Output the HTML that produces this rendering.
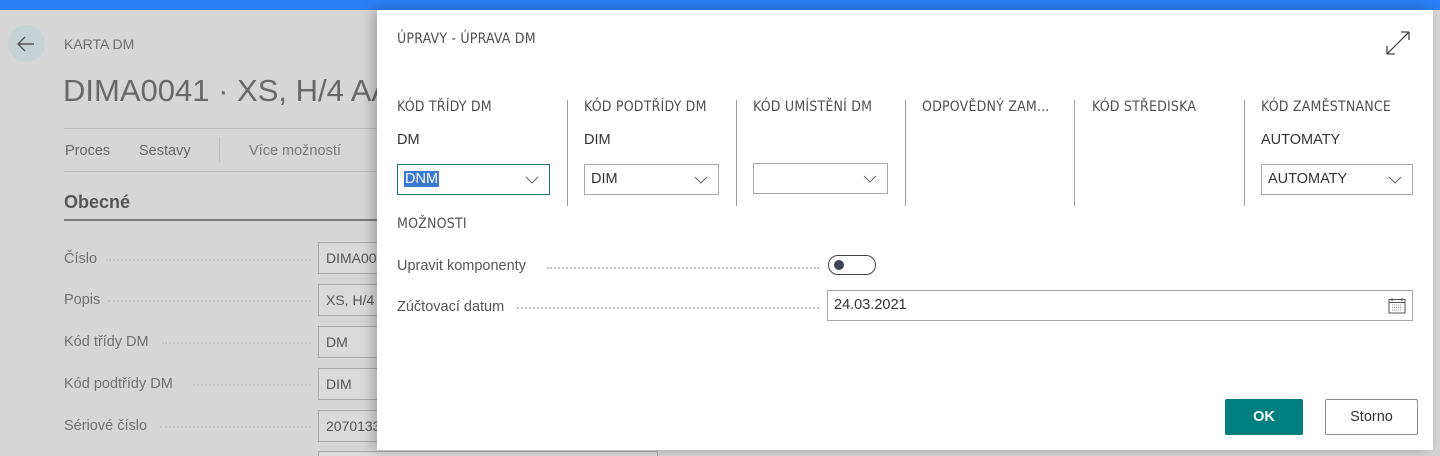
<!DOCTYPE html><html><head><meta charset="utf-8"><style>
*{margin:0;padding:0;box-sizing:border-box}
html,body{width:1440px;height:456px;overflow:hidden}
body{background:#d6d6d6;font-family:"Liberation Sans",sans-serif;position:relative;color:#505050}
.a{position:absolute;white-space:nowrap}
.bg{color:#6e6e6e}
.fld{position:absolute;left:318px;width:360px;height:32px;border:1px solid #a8a8a8;background:#dadada;font-size:14px;color:#555;padding:7px 7px}
.lbl{position:absolute;left:64px;font-size:14.5px;color:#707070}
.dots{position:absolute;border-top:2px dotted #c4c4c4;height:0}
#dlg{position:absolute;left:377px;top:10px;width:1056px;height:440px;background:#fff;box-shadow:-4px 0 12px rgba(0,0,0,.25)}
.h{position:absolute;font-size:14px;letter-spacing:.2px;color:#505050;font-family:"DejaVu Sans Condensed","Liberation Sans",sans-serif}
.v{position:absolute;font-size:14.5px;color:#333}
.sel{position:absolute;height:31px;border:1px solid #a8a8a8;font-size:14.5px;color:#333;padding:6px 6px}
.sel svg{position:absolute;right:10px;top:11px}
.sep{position:absolute;top:90px;height:106px;width:1px;background:#a0a0a0}
</style></head><body>
<div class="a" style="left:0;top:0;width:1440px;height:10px;background:#2b7ef5"></div>
<div class="a" style="left:8px;top:25px;width:37px;height:37px;border-radius:50%;background:#c6d3d4"></div>
<svg class="a" style="left:15px;top:33px" width="22" height="22" viewBox="0 0 22 22"><path d="M19 11H3M10 4L3 11l7 7" fill="none" stroke="#555" stroke-width="1.4"/></svg>
<div class="a bg" style="left:64px;top:36px;font-size:14px">KARTA DM</div>
<div class="a" style="left:63px;top:73px;font-size:31px;color:#686868">DIMA0041 · XS, H/4 AA</div>
<div class="a" style="left:64px;top:128px;width:320px;height:1px;background:#bdbdbd"></div>
<div class="a" style="left:65px;top:143px;font-size:14.5px;color:#666">Proces</div>
<div class="a" style="left:139px;top:143px;font-size:14.5px;color:#666">Sestavy</div>
<div class="a" style="left:219px;top:137px;width:1px;height:25px;background:#bbb"></div>
<div class="a" style="left:249px;top:143px;font-size:14.5px;color:#777">Více možností</div>
<div class="a" style="left:64px;top:171px;width:320px;height:1px;background:#bdbdbd"></div>
<div class="a" style="left:64px;top:192px;font-size:18px;font-weight:bold;color:#555">Obecné</div>
<div class="a" style="left:64px;top:219px;width:320px;height:2px;background:#7a7a7a"></div>
<div class="lbl" style="top:251px">Číslo</div><div class="dots" style="left:106px;width:205px;top:259px"></div><div class="fld" style="top:242px">DIMA0041</div>
<div class="lbl" style="top:292px">Popis</div><div class="dots" style="left:108px;width:203px;top:300px"></div><div class="fld" style="top:284px">XS, H/4 AA</div>
<div class="lbl" style="top:334px">Kód třídy DM</div><div class="dots" style="left:162px;width:149px;top:342px"></div><div class="fld" style="top:326px">DM</div>
<div class="lbl" style="top:376px">Kód podtřídy DM</div><div class="dots" style="left:193px;width:118px;top:384px"></div><div class="fld" style="top:368px">DIM</div>
<div class="lbl" style="top:418px">Sériové číslo</div><div class="dots" style="left:160px;width:151px;top:426px"></div><div class="fld" style="top:410px">20701332</div>
<div class="fld" style="top:451px;width:340px;height:5px"></div>
<div id="dlg">
<div class="h" style="left:20px;top:21px">ÚPRAVY - ÚPRAVA DM</div>
<svg class="a" style="left:1008px;top:20px" width="26" height="26" viewBox="0 0 26 26"><path d="M2 24L24 2M2 24v-8M2 24h8M24 2h-8M24 2v8" fill="none" stroke="#444" stroke-width="1.3"/></svg>
<div class="h" style="left:20px;top:89px">KÓD TŘÍDY DM</div>
<div class="v" style="left:20px;top:122px">DM</div>
<div class="sel" style="left:20px;top:154px;width:153px;border-color:#19777a"><span style="background:#3a78d6;color:#fff;padding:0 1px">DNM</span><svg width="14" height="8"><path d="M1 1l6 6 6-6" fill="none" stroke="#666"/></svg></div>
<div class="sep" style="left:190px"></div>
<div class="h" style="left:207px;top:89px">KÓD PODTŘÍDY DM</div>
<div class="v" style="left:207px;top:122px">DIM</div>
<div class="sel" style="left:207px;top:154px;width:135px">DIM<svg width="14" height="8"><path d="M1 1l6 6 6-6" fill="none" stroke="#666"/></svg></div>
<div class="sep" style="left:359px"></div>
<div class="h" style="left:376px;top:89px">KÓD UMÍSTĚNÍ DM</div>
<div class="sel" style="left:376px;top:153px;width:135px"><svg width="14" height="8"><path d="M1 1l6 6 6-6" fill="none" stroke="#666"/></svg></div>
<div class="sep" style="left:528px"></div>
<div class="h" style="left:545px;top:89px">ODPOVĚDNÝ ZAM...</div>
<div class="sep" style="left:697px"></div>
<div class="h" style="left:715px;top:89px">KÓD STŘEDISKA</div>
<div class="sep" style="left:867px"></div>
<div class="h" style="left:884px;top:89px">KÓD ZAMĚSTNANCE</div>
<div class="v" style="left:884px;top:122px">AUTOMATY</div>
<div class="sel" style="left:884px;top:154px;width:152px">AUTOMATY<svg width="14" height="8"><path d="M1 1l6 6 6-6" fill="none" stroke="#666"/></svg></div>
<div class="h" style="left:20px;top:206px">MOŽNOSTI</div>
<div class="v" style="left:20px;top:248px;color:#555">Upravit komponenty</div>
<div class="dots" style="left:170px;width:272px;top:257px"></div>
<div class="a" style="left:451px;top:245px;width:48px;height:20px;border:1px solid #444;border-radius:10px"><div class="a" style="left:5px;top:4px;width:10px;height:10px;border-radius:50%;background:#3f4550"></div></div>
<div class="v" style="left:20px;top:289px;color:#555">Zúčtovací datum</div>
<div class="dots" style="left:140px;width:302px;top:297px"></div>
<div class="sel" style="left:450px;top:280px;width:586px;height:31px">24.03.2021
<svg style="right:6px;top:6px" width="18" height="17" viewBox="0 0 18 17"><rect x="1" y="2.5" width="16" height="13.5" fill="none" stroke="#555"/><path d="M1 5.5h16M4 1v3M14 1v3" stroke="#555"/><path d="M4 8h10M4 10.5h10M4 13h10" stroke="#999" stroke-dasharray="1 1"/></svg></div>
<div class="a" style="left:848px;top:389px;width:78px;height:36px;background:#007e80;border-radius:2px;color:#fff;font-weight:bold;font-size:14.5px;text-align:center;line-height:36px">OK</div>
<div class="a" style="left:948px;top:389px;width:93px;height:36px;border:1px solid #8a8a8a;border-radius:2px;color:#333;font-size:14.5px;text-align:center;line-height:34px">Storno</div>
</div>
</body></html>
